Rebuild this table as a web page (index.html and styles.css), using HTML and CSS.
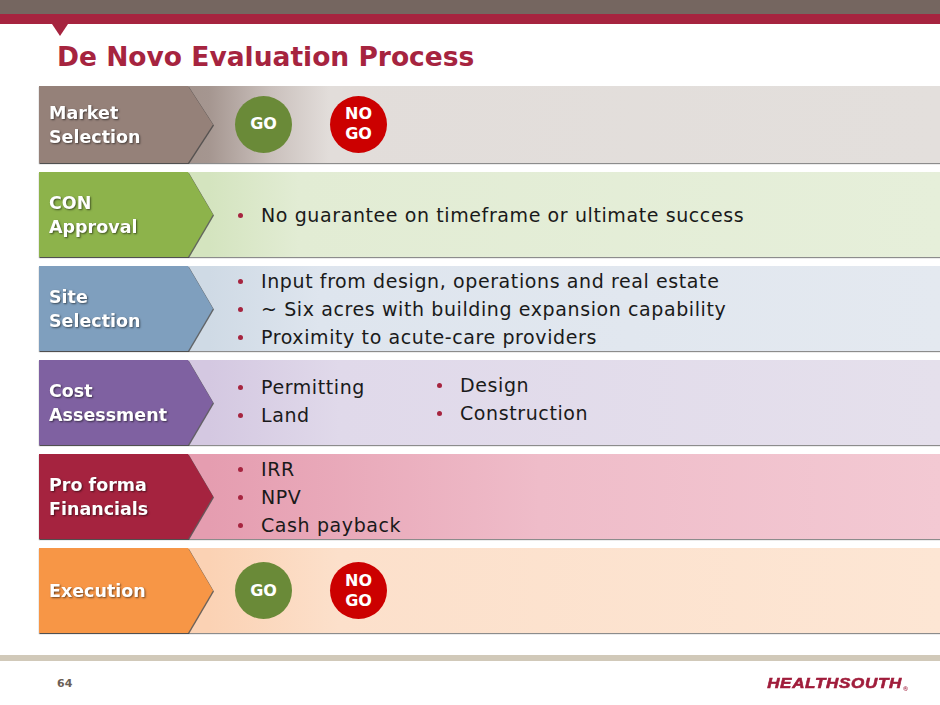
FILE: index.html
```html
<!DOCTYPE html>
<html>
<head>
<meta charset="utf-8">
<link rel="stylesheet" href="styles.css">
</head>
<body>
<div class="slide">
  <header class="topbar">
    <div class="band-brown"></div>
    <div class="band-red"><span class="pointer"></span></div>
  </header>
  <h1 class="title">De Novo Evaluation Process</h1>

  <main class="rows">
    <section class="row row-market">
      <div class="tag-wrap"><div class="tag"><span>Market<br>Selection</span></div></div>
      <div class="body body-circles">
        <div class="circle go">GO</div>
        <div class="circle nogo">NO<br>GO</div>
      </div>
    </section>

    <section class="row row-con">
      <div class="tag-wrap"><div class="tag"><span>CON<br>Approval</span></div></div>
      <div class="body">
        <ul class="bullets">
          <li>No guarantee on timeframe or ultimate success</li>
        </ul>
      </div>
    </section>

    <section class="row row-site">
      <div class="tag-wrap"><div class="tag"><span>Site<br>Selection</span></div></div>
      <div class="body">
        <ul class="bullets">
          <li>Input from design, operations and real estate</li>
          <li>~ Six acres with building expansion capability</li>
          <li>Proximity to acute-care providers</li>
        </ul>
      </div>
    </section>

    <section class="row row-cost">
      <div class="tag-wrap"><div class="tag"><span>Cost<br>Assessment</span></div></div>
      <div class="body body-cols">
        <ul class="bullets col-a">
          <li>Permitting</li>
          <li>Land</li>
        </ul>
        <ul class="bullets col-b">
          <li>Design</li>
          <li>Construction</li>
        </ul>
      </div>
    </section>

    <section class="row row-proforma">
      <div class="tag-wrap"><div class="tag"><span>Pro forma<br>Financials</span></div></div>
      <div class="body">
        <ul class="bullets">
          <li>IRR</li>
          <li>NPV</li>
          <li>Cash payback</li>
        </ul>
      </div>
    </section>

    <section class="row row-exec">
      <div class="tag-wrap"><div class="tag"><span>Execution</span></div></div>
      <div class="body body-circles">
        <div class="circle go">GO</div>
        <div class="circle nogo">NO<br>GO</div>
      </div>
    </section>
  </main>

  <footer class="footer">
    <div class="footer-line"></div>
    <div class="footer-row">
      <span class="page-num">64</span>
      <span class="logo">HEALTHSOUTH<sup>®</sup></span>
    </div>
  </footer>
</div>
</body>
</html>
```

FILE: styles.css
```css
* { box-sizing: border-box; }
html, body { margin: 0; padding: 0; background: #ffffff; }
body { font-family: "DejaVu Sans", "Liberation Sans", sans-serif; }

.slide { width: 940px; height: 705px; overflow: hidden; position: relative; }

.topbar { display: flex; flex-direction: column; }
.band-brown { height: 14px; background: #756660; }
.band-red { height: 10px; background: #a6243f; position: relative; }
.pointer {
  position: absolute; left: 52px; top: 10px;
  width: 0; height: 0;
  border-left: 8px solid transparent;
  border-right: 8px solid transparent;
  border-top: 12px solid #a6243f;
}

.title {
  margin: 15px 0 0 57px;
  height: 47px;
  font-family: "DejaVu Sans", sans-serif;
  font-weight: bold;
  font-size: 26.5px;
  line-height: 36px;
  color: #a6243f;
  letter-spacing: 0;
}

.rows {
  display: flex; flex-direction: column; gap: 9px;
  padding-left: 39px;
}
.row {
  position: relative;
  height: 85px;
  display: flex;
  box-shadow: 0 1px 1px rgba(0,0,0,0.45);
}
.row-market { height: 77px; }

.tag-wrap {
  position: absolute; left: 0; top: 0; bottom: 0; width: 175px;
  filter: drop-shadow(1px 1px 0.6px rgba(60,60,60,0.75));
  z-index: 2;
}
.tag {
  height: 100%;
  clip-path: polygon(0 0, 149px 0, 174px 50%, 149px 100%, 0 100%);
  display: flex; align-items: center;
  padding-left: 10px;
  color: #fff;
  font-family: "DejaVu Sans", sans-serif;
  font-weight: bold;
  font-size: 17.5px;
  line-height: 24px;
  letter-spacing: 0;
  text-shadow: 1px 1px 2px rgba(0,0,0,0.55);
}

.body {
  flex: 1;
  display: flex; align-items: center;
  padding-left: 199px;
  color: #1a1a1a;
  font-family: "DejaVu Sans", sans-serif;
  font-size: 19px;
  letter-spacing: 0.6px;
}
.bullets { list-style: none; margin: 0; padding: 0; }
.bullets li { position: relative; line-height: 28px; padding-left: 23px; }
.bullets li::before {
  content: ""; position: absolute; left: 0; top: 12px;
  width: 5px; height: 5px; border-radius: 50%;
  background: #a6243f;
}
.body-cols { align-items: center; gap: 0; padding-bottom: 3px; }
.col-a { width: 199px; }
.col-b { margin-top: -4px; }

.body-circles { padding-left: 196px; gap: 38px; letter-spacing: 0; }
.circle {
  width: 57px; height: 57px; border-radius: 50%;
  display: flex; align-items: center; justify-content: center;
  text-align: center;
  color: #fff; font-weight: bold; font-size: 16px; line-height: 20px;
  font-family: "DejaVu Sans", sans-serif;
}
.go { background: #6a8a38; }
.nogo { background: #cc0000; }
.row-market .body-circles { padding-bottom: 1px; }

.row-market { background: linear-gradient(to right, #968279 0, #a59690 170px, #c9bfbb 230px, #e2ddda 290px, #e3dfdc 100%); }
.row-market .tag { background: #958179; }
.row-con { background: linear-gradient(to right, #d4e4bf 170px, #e2ecd4 260px, #e6efda 100%); }
.row-con .tag { background: #8db34b; }
.row-site { background: linear-gradient(to right, #cfdae5 170px, #dee5ee 280px, #e4e9f0 100%); }
.row-site .tag { background: #7f9fbe; }
.row-cost { background: linear-gradient(to right, #d4c8e1 170px, #e0d9ea 300px, #e5e0ec 100%); }
.row-cost .tag { background: #7f61a1; }
.row-proforma { background: linear-gradient(to right, #e59db0 170px, #efbcc9 500px, #f3c9d3 100%); }
.row-proforma .tag { background: #a5233f; }
.row-exec { background: linear-gradient(to right, #fbd2b4 170px, #fce0cb 300px, #fde6d4 100%); }
.row-exec .tag { background: #f79646; }

.footer { position: absolute; left: 0; right: 0; top: 655px; }
.footer-line { height: 6px; background: #d1c9b9; }
.footer-row {
  display: flex; justify-content: space-between; align-items: center;
  padding: 13px 31px 0 57px;
}
.page-num {
  font-family: "DejaVu Sans", sans-serif; font-weight: bold;
  font-size: 11px; color: #6b6056;
}
.logo {
  font-family: "Liberation Sans", sans-serif;
  font-weight: 900; font-style: italic;
  font-size: 15.5px; letter-spacing: 0.6px;
  color: #a01d3b;
  -webkit-text-stroke: 0.6px #a01d3b;
  transform: scaleX(1.1);
  transform-origin: right center;
  margin-top: 0;
}
.logo sup { font-size: 6px; vertical-align: -3px; -webkit-text-stroke: 0; margin-left: 1px; }
```
